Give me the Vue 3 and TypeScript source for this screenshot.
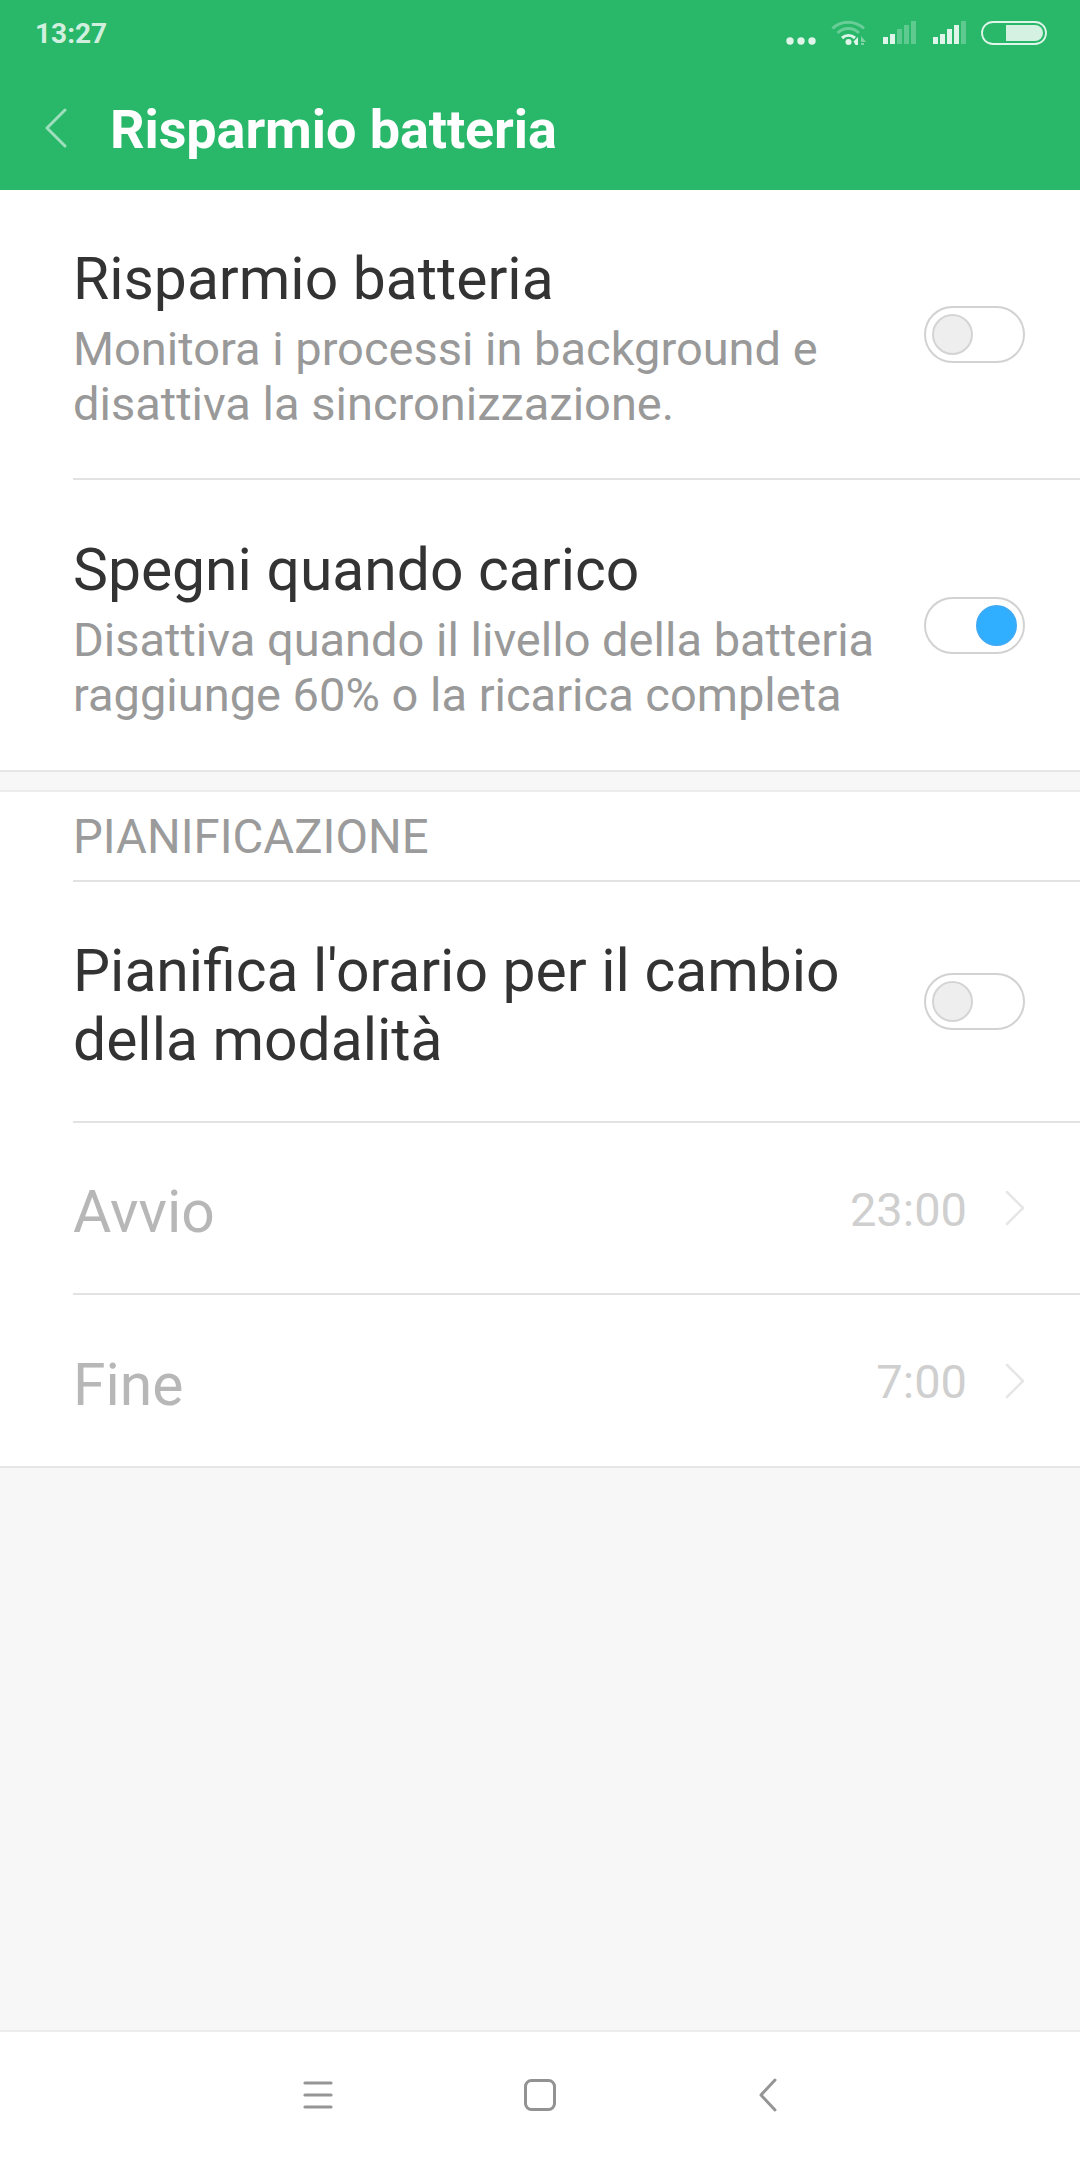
<script setup lang="ts">
interface Row { title: string; sub: string[]; on: boolean }
const rows: Row[] = [
  { title: 'Risparmio batteria', sub: ['Monitora i processi in background e', 'disattiva la sincronizzazione.'], on: false },
  { title: 'Spegni quando carico', sub: ['Disattiva quando il livello della batteria', 'raggiunge 60% o la ricarica completa'], on: true },
]
const times = [
  { label: 'Avvio', value: '23:00' },
  { label: 'Fine', value: '7:00' },
]
const barTops = [16, 13, 8, 4, 0]
</script>

<template>
  <div class="page">
    <header class="head">
      <div class="status">
        <span class="time">13:27</span>
        <div class="icons">
          <svg class="dots" width="30" height="8" viewBox="0 0 30 8"><circle cx="4" cy="4" r="3.7"/><circle cx="15" cy="4" r="3.7"/><circle cx="26" cy="4" r="3.7"/></svg>
          <svg class="wifi" width="36" height="26" viewBox="0 0 36 26" fill="none">
            <path d="M1.5 8.5C10 0 24 0 33 8.5" stroke="#fff" stroke-opacity=".3" stroke-width="3"/>
            <path d="M6.5 13C13 7 22 7 28 13" stroke="#fff" stroke-opacity=".3" stroke-width="3"/>
            <path d="M11 18C15 14.500 20 14.500 24 18" stroke="#fff" stroke-opacity=".85" stroke-width="3"/>
            <circle cx="17.500" cy="22" r="3" fill="#fff" fill-opacity=".85"/>
            <path d="M27 17v8h-2.500l-2-3.500z" fill="#fff" fill-opacity=".85"/>
            <path d="M30 16l5 6h-5zM30 23h3v2h-3z" fill="#fff" fill-opacity=".4"/>
          </svg>
          <svg class="sig" width="34" height="23" viewBox="0 0 34 23">
            <path v-for="(t, b) in barTops" :key="b" :d="`M${b * 7} ${t}h5V23h-5z`" :fill-opacity="b < 2 ? 0.85 : 0.25" fill="#fff"/>
          </svg>
          <svg class="sig" width="34" height="23" viewBox="0 0 34 23">
            <path v-for="(t, b) in barTops" :key="b" :d="`M${b * 7} ${t}h5V23h-5z`" :fill-opacity="b < 4 ? 0.85 : 0.25" fill="#fff"/>
          </svg>
          <svg class="batt" width="66" height="24" viewBox="0 0 66 24" fill="none">
            <rect x="1" y="1" width="64" height="22" rx="11" stroke="#fff" stroke-opacity=".85" stroke-width="1.800"/>
            <path d="M25 4h29a8 8 0 0 1 0 16H25z" fill="#fff" fill-opacity=".8"/>
          </svg>
        </div>
      </div>
      <div class="bar">
        <svg class="back" width="24" height="40" viewBox="0 0 24 40" fill="none"><path d="M21 2L3 20l18 18" stroke="#fff" stroke-opacity=".55" stroke-width="3" stroke-linecap="round" stroke-linejoin="round"/></svg>
        <h1>Risparmio batteria</h1>
      </div>
    </header>

    <section class="group top">
      <div v-for="(r, i) in rows" :key="r.title" class="row" :class="{ last: i === rows.length - 1 }">
        <div class="text">
          <div class="title">{{ r.title }}</div>
          <div class="sub"><div v-for="l in r.sub" :key="l">{{ l }}</div></div>
        </div>
        <div class="toggle" :class="{ on: r.on }"><span class="knob"></span></div>
      </div>
    </section>

    <section class="group second">
      <div class="label"><span>PIANIFICAZIONE</span></div>
      <div class="row plan">
        <div class="text"><div class="title">Pianifica l'orario per il cambio<br>della modalità</div></div>
        <div class="toggle"><span class="knob"></span></div>
      </div>
      <div v-for="(t, i) in times" :key="t.label" class="row time-row" :class="{ last: i === times.length - 1 }">
        <div class="text"><div class="title dim">{{ t.label }}</div></div>
        <div class="val">{{ t.value }}</div>
        <svg class="chev" width="20" height="36" viewBox="0 0 20 36" fill="none"><path d="M2 2l16 16L2 34" stroke="#e6e6e6" stroke-width="2.500" stroke-linecap="round" stroke-linejoin="round"/></svg>
      </div>
    </section>

    <div class="fill"></div>

    <nav class="nav">
      <svg class="n1" width="30" height="30" viewBox="0 0 30 30"><path d="M2 3h26M2 15h26M2 27h26" stroke="#959595" stroke-width="3.200" stroke-linecap="round"/></svg>
      <svg class="n2" width="32" height="32" viewBox="0 0 32 32" fill="none"><rect x="1.500" y="1.500" width="29" height="29" rx="6" stroke="#929292" stroke-width="3"/></svg>
      <svg class="n3" width="18" height="34" viewBox="0 0 18 34" fill="none"><path d="M16 2L2 17l14 15" stroke="#959595" stroke-width="3" stroke-linecap="round" stroke-linejoin="round"/></svg>
    </nav>
  </div>
</template>

<style scoped>
.page {
  width: 1080px;
  height: 2160px;
  display: flex;
  flex-direction: column;
  background: #f7f7f7;
  font-family: Roboto, "Noto Sans", sans-serif;
  overflow: hidden;
}
.head { height: 190px; background: #29b86a; color: #fff; flex: none; }
.status {
  height: 66px;
  padding: 0 33px 0 35px;
  display: flex;
  justify-content: space-between;
  align-items: center;
}
.time { font-size: 28px; font-weight: 700; color: rgba(255, 255, 255, .8); }
.icons { display: flex; align-items: flex-end; height: 26px; }
.icons svg { display: block; flex: none; }
.dots { fill: rgba(255, 255, 255, .85); margin-bottom: 1px; }
.wifi { margin-left: 15px; }
.sig { margin-left: 16px; margin-bottom: 2px; }
.batt { margin-left: 14px; margin-bottom: 1px; }
.bar { height: 124px; display: flex; align-items: center; padding-left: 44px; box-sizing: border-box; }
.back { flex: none; }
h1 { margin: 3px 0 0 42px; font-size: 54px; font-weight: 700; line-height: 1; letter-spacing: -0.1px; }

.group { background: #fff; flex: none; border-bottom: 2px solid #e6e6e6; }
.second { border-top: 2px solid #ececec; margin-top: 18px; }
.row {
  display: flex;
  align-items: center;
  margin-left: 73px;
  padding-right: 55px;
  border-bottom: 2px solid #e2e2e2;
  box-sizing: border-box;
}
.row.last { border-bottom: 0; }
.top .row { height: 290px; }
.text { flex: 1; padding-top: 7px; }
.title { font-size: 58.8px; line-height: 69px; color: #333; }
.sub { font-size: 47px; line-height: 55px; color: #999; margin-top: 8px; }
.toggle {
  width: 101px;
  height: 57px;
  border: 2px solid #d2d2d2;
  border-radius: 29px;
  box-sizing: border-box;
  display: flex;
  align-items: center;
  padding: 0 6px;
  flex: none;
}
.knob {
  width: 41px;
  height: 41px;
  border-radius: 50%;
  box-sizing: border-box;
  background: #eee;
  border: 2px solid #d4d4d4;
}
.toggle.on { justify-content: flex-end; }
.toggle.on .knob { background: #30aeff; border-color: #3eaaf5; }
.label {
  margin-left: 73px;
  height: 90px;
  padding-top: 2px;
  display: flex;
  align-items: center;
  border-bottom: 2px solid #e2e2e2;
  font-size: 47.3px;
  color: #9b9b9b;
  box-sizing: border-box;
}
.plan { height: 241px; }
.time-row { height: 172px; }
.time-row.last { height: 171px; }
.dim { color: #b7b7b7; }
.val { font-size: 47px; color: #cfcfcf; margin-right: 38px; padding-top: 2px; }
.chev { flex: none; }
.fill { flex: 1; }
.nav {
  height: 130px;
  flex: none;
  background: #fff;
  border-top: 2px solid #ececec;
  box-sizing: border-box;
  display: flex;
  align-items: center;
  padding-left: 303px;
  padding-bottom: 2px;
}
.n2 { margin-left: 191px; }
.n3 { margin-left: 203px; }
</style>
